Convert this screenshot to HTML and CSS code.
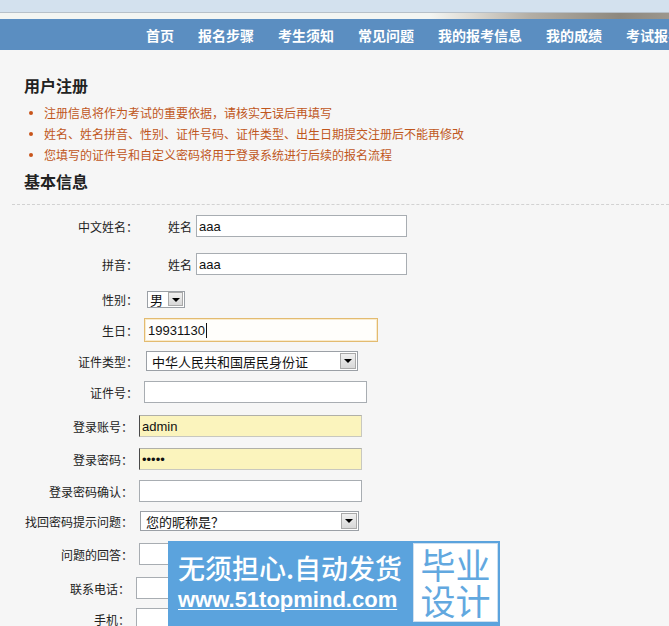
FILE: index.html
```html
<!DOCTYPE html>
<html lang="zh-CN">
<head>
<meta charset="utf-8">
<title>用户注册</title>
<link rel="stylesheet" href="styles.css">
</head>
<body>
<header class="header">
  <div class="header__top"></div>
  <div class="header__line"></div>
  <nav class="nav">
    <a class="nav__item">首页</a>
    <a class="nav__item">报名步骤</a>
    <a class="nav__item">考生须知</a>
    <a class="nav__item">常见问题</a>
    <a class="nav__item">我的报考信息</a>
    <a class="nav__item">我的成绩</a>
    <a class="nav__item">考试报名</a>
  </nav>
</header>

<main class="main">
  <section class="intro">
    <h1 class="intro__title">用户注册</h1>
    <ul class="notes">
      <li class="notes__item">注册信息将作为考试的重要依据，请核实无误后再填写</li>
      <li class="notes__item">姓名、姓名拼音、性别、证件号码、证件类型、出生日期提交注册后不能再修改</li>
      <li class="notes__item">您填写的证件号和自定义密码将用于登录系统进行后续的报名流程</li>
    </ul>
    <h2 class="intro__subtitle">基本信息</h2>
  </section>

  <div class="divider"></div>

  <form class="form">
    <div class="row">
      <span class="label">中文姓名：</span>
      <span class="prefix">姓名</span>
      <input class="input input--name" type="text" value="aaa">
    </div>
    <div class="row">
      <span class="label">拼音：</span>
      <span class="prefix">姓名</span>
      <input class="input input--name" type="text" value="aaa">
    </div>
    <div class="row">
      <span class="label">性别：</span>
      <div class="select select--small">
        <span class="select__value">男</span>
        <span class="select__arrow"></span>
      </div>
    </div>
    <div class="row">
      <span class="label">生日：</span>
      <div class="input input--focus">19931130<span class="caret"></span></div>
    </div>
    <div class="row">
      <span class="label">证件类型：</span>
      <div class="select select--id">
        <span class="select__value">中华人民共和国居民身份证</span>
        <span class="select__arrow"></span>
      </div>
    </div>
    <div class="row">
      <span class="label">证件号：</span>
      <input class="input" type="text" value="">
    </div>
    <div class="row">
      <span class="label label--mid">登录账号：</span>
      <input class="input input--filled" type="text" value="admin">
    </div>
    <div class="row">
      <span class="label label--mid">登录密码：</span>
      <input class="input input--filled" type="password" value="admin">
    </div>
    <div class="row">
      <span class="label label--mid">登录密码确认：</span>
      <input class="input" type="password" value="">
    </div>
    <div class="row">
      <span class="label label--mid">找回密码提示问题：</span>
      <div class="select select--question">
        <span class="select__value">您的昵称是？</span>
        <span class="select__arrow"></span>
      </div>
    </div>
    <div class="row">
      <span class="label label--mid">问题的回答：</span>
      <input class="input" type="text" value="">
    </div>
    <div class="row">
      <span class="label label--narrow">联系电话：</span>
      <input class="input" type="text" value="">
    </div>
    <div class="row">
      <span class="label label--narrow">手机：</span>
      <input class="input" type="text" value="">
    </div>
  </form>
</main>

<div class="watermark">
  <div class="watermark__text">
    <div class="watermark__slogan">无须担心.自动发货</div>
    <div class="watermark__url">www.51topmind.com</div>
  </div>
  <div class="watermark__badge">毕业<br>设计</div>
</div>
</body>
</html>
```

FILE: styles.css
```css
* { box-sizing: border-box; }

html, body {
  margin: 0;
  padding: 0;
}

body {
  background: #f6f6f6;
  font-family: "Noto Sans CJK SC", "Noto Sans", sans-serif;
  font-size: 12px;
  color: #222;
  overflow: hidden;
  height: 626px;
  position: relative;
}

/* header */
.header__top {
  height: 12px;
  background: #d3e1ee;
}

.header__line {
  height: 7px;
  border-top: 1px solid #b7c0c8;
  background: linear-gradient(to right, #f3f5f2 0, #f3f5f2 430px, #dedbd4 470px, #b3aea5 530px, #8d887e 620px, #9c978e 669px);
}

.nav {
  height: 31px;
  background: #5b8ec1;
  display: flex;
  align-items: center;
  gap: 24px;
  padding-left: 146px;
  white-space: nowrap;
  overflow: hidden;
}

.nav__item {
  color: #fff;
  font-size: 14px;
  font-weight: 700;
  flex: none;
}

/* intro */
.intro {
  padding: 0 24px;
}

.intro__title {
  margin: 25px 0 0;
  font-size: 16px;
  line-height: 20px;
  font-weight: 700;
  color: #222;
}

.notes {
  list-style: none;
  margin: 7px 0 0;
  padding: 0;
}

.notes__item {
  position: relative;
  padding-left: 20px;
  line-height: 21px;
  color: #c0561c;
  font-size: 12px;
}

.notes__item::before {
  content: "";
  position: absolute;
  left: 5px;
  top: 9px;
  width: 4px;
  height: 4px;
  border-radius: 50%;
  background: #c8541a;
}

.intro__subtitle {
  margin: 6px 0 0;
  font-size: 16px;
  line-height: 20px;
  font-weight: 700;
  color: #222;
}

.divider {
  margin: 13px 0 0 12px;
  border-top: 1px dashed #d2d2d2;
}

/* form */
.form {
  padding-top: 10px;
}

.row {
  display: flex;
  align-items: center;
  height: 22px;
  margin-top: 10px;
}

.row:nth-child(1) { margin-top: 0; }
.row:nth-child(2) { margin-top: 16px; }
.row:nth-child(3) { margin-top: 13px; }
.row:nth-child(4),
.row:nth-child(5),
.row:nth-child(6) { margin-top: 9px; }
.row:nth-child(7) { margin-top: 12px; }
.row:nth-child(8) { margin-top: 11px; }
.row:nth-child(10) { margin-top: 8px; }
.row:nth-child(11) { margin-top: 11px; }
.row:nth-child(12) { margin-top: 12px; }
.row:nth-child(13) { margin-top: 9px; }

.label {
  flex: none;
  width: 138px;
  text-align: right;
  color: #222;
  font-size: 12px;
  white-space: nowrap;
}

.label--mid { width: 133px; }
.label--narrow { width: 130px; }

.prefix {
  margin-left: 30px;
  width: 28px;
  color: #222;
}

.input {
  flex: none;
  display: flex;
  align-items: center;
  margin-left: 6px;
  width: 223px;
  height: 22px;
  padding: 0 2px;
  border: 1px solid #a8adb2;
  background: #fff;
  font-family: "Liberation Sans", Arial, sans-serif;
  font-size: 13px;
  color: #111;
  outline: none;
}

.input--name {
  margin-left: 0;
  width: 211px;
}

.input--focus {
  width: 234px;
  height: 24px;
  padding-left: 3px;
  border: 1px solid #e3bb70;
  box-shadow: inset 0 0 0 1px #f9ebcd;
  background: #fffefb;
}

.caret {
  display: inline-block;
  width: 1px;
  height: 15px;
  margin-left: 1px;
  background: #111;
}

.input--filled {
  background: #fbf4bd;
  border-color: #b0b0a8 #c8c8bf #c8c8bf #4a4a4a;
}

/* fake select */
.select {
  flex: none;
  display: flex;
  align-items: center;
  margin-left: 8px;
  height: 20px;
  border: 1px solid #9ba0a6;
  background: #fff;
  font-size: 13px;
  color: #111;
}

.select__value {
  flex: 1;
  padding-left: 5px;
  white-space: nowrap;
  overflow: hidden;
}

.select__arrow {
  position: relative;
  flex: none;
  width: 16px;
  height: 16px;
  margin-right: 1px;
  background: linear-gradient(#f0f0f0, #d8d8d8);
  border: 1px solid #a9a9a9;
}

.select__arrow::after {
  content: "";
  position: absolute;
  left: 3px;
  top: 5px;
  border-left: 4px solid transparent;
  border-right: 4px solid transparent;
  border-top: 4px solid #000;
}

.select--small {
  margin-left: 9px;
  width: 38px;
  height: 17px;
}

.select--small .select__value {
  padding-left: 2px;
}

.select--small .select__arrow {
  width: 15px;
  height: 14px;
}

.select--id { width: 212px; }

.select--question {
  margin-left: 7px;
  width: 219px;
}

/* watermark overlay */
.watermark {
  position: absolute;
  left: 168px;
  top: 541px;
  width: 332px;
  height: 85px;
  background: #5ba3dd;
  display: flex;
  z-index: 2;
}

.watermark__text {
  flex: 1;
  padding: 10px 0 0 10px;
  color: #fff;
}

.watermark__slogan {
  font-size: 27px;
  line-height: 34px;
  font-weight: 500;
  white-space: nowrap;
}

.watermark__url {
  margin-top: 2px;
  font-family: "Liberation Sans", Arial, sans-serif;
  font-weight: 700;
  font-size: 22px;
  line-height: 26px;
  white-space: nowrap;
  text-decoration: underline;
  text-decoration-thickness: 1px;
  text-underline-offset: 2px;
}

.watermark__badge {
  flex: none;
  width: 85px;
  height: 79px;
  margin: 2px 2px 0 0;
  background: #fff;
  border: 1px solid #cfe0ef;
  color: #62a8df;
  font-size: 35px;
  line-height: 36px;
  text-align: center;
  padding-top: 2px;
}
```
